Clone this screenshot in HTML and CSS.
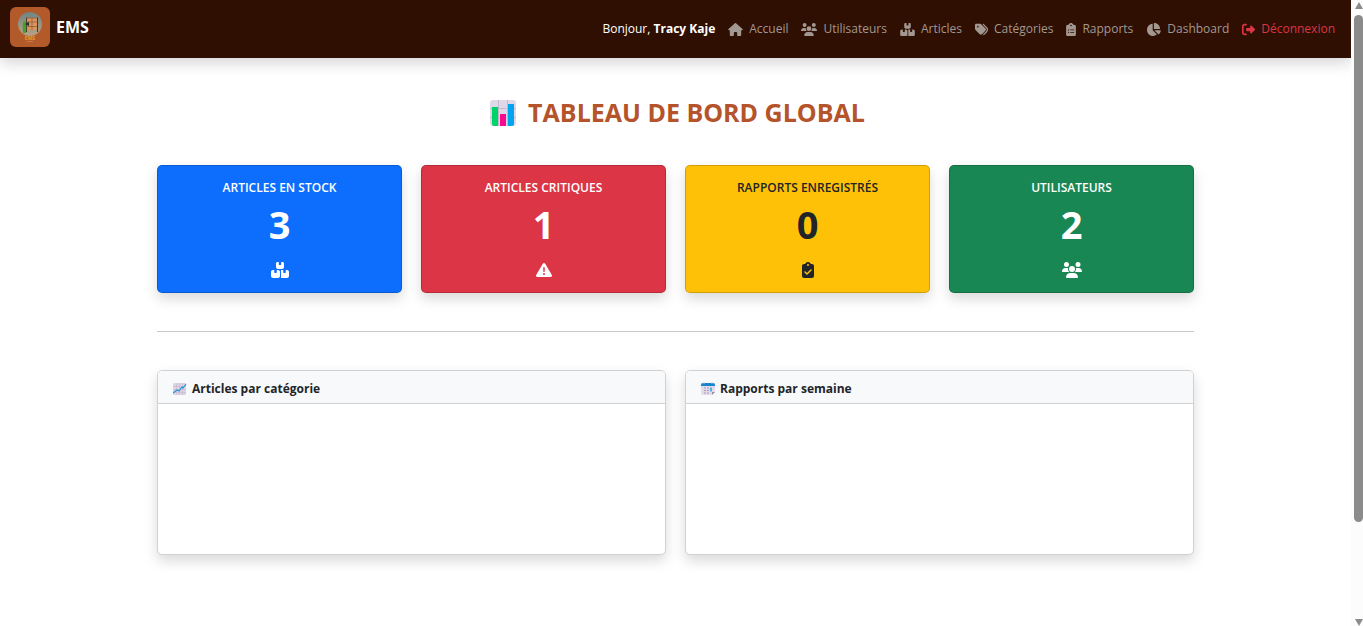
FILE: index.html
```html
<!DOCTYPE html>
<html lang="fr">
<head>
<meta charset="utf-8">
<title>EMS - Tableau de bord</title>
<link rel="stylesheet" href="styles.css">
</head>
<body>
<svg class="defs" aria-hidden="true">
  <symbol id="house" viewBox="0 0 576 512"><path d="M575.8 255.5c0 18-15 32.1-32 32.1h-32l.7 160.2c0 2.7-.2 5.4-.5 8.1V472c0 22.1-17.9 40-40 40H456c-1.100 0-2.200 0-3.300-.1c-1.400 .1-2.800 .1-4.200 .1H416 392c-22.100 0-40-17.900-40-40V448 384c0-17.700-14.300-32-32-32H256c-17.700 0-32 14.300-32 32v64 24c0 22.100-17.900 40-40 40H160 128.100c-1.500 0-3-.1-4.500-.2c-1.200 .1-2.400 .2-3.600 .2H104c-22.100 0-40-17.900-40-40V360c0-.9 0-1.900 .1-2.800V287.600H32c-18 0-32-14-32-32.100c0-9 3-17 10-24L266.400 8c7-7 15-8 22-8s15 2 21 7L564.800 231.500c8 7 12 15 11 24z"/></symbol>
  <symbol id="users" viewBox="0 0 640 512"><path d="M144 0a80 80 0 1 1 0 160A80 80 0 1 1 144 0zM512 0a80 80 0 1 1 0 160A80 80 0 1 1 512 0zM0 298.7C0 239.8 47.8 192 106.7 192h42.7c15.9 0 31 3.5 44.6 9.7c-1.3 7.2-1.9 14.7-1.9 22.3c0 38.2 16.8 72.5 43.3 96H21.3C9.6 320 0 310.4 0 298.7zM405.3 320h-.7c26.6-23.5 43.3-57.8 43.3-96c0-7.6-.7-15-1.9-22.3c13.6-6.3 28.7-9.7 44.6-9.7h42.7C592.2 192 640 239.8 640 298.7c0 11.8-9.6 21.3-21.3 21.3H405.3zM224 224a96 96 0 1 1 192 0 96 96 0 1 1 -192 0zM128 485.3C128 411.7 187.7 352 261.3 352H378.7C452.3 352 512 411.7 512 485.3c0 14.7-11.9 26.7-26.7 26.7H154.7c-14.7 0-26.7-11.9-26.7-26.7z"/></symbol>
  <symbol id="boxes" viewBox="0 0 576 512"><path d="M248 0H208c-26.5 0-48 21.5-48 48V160c0 35.3 28.7 64 64 64H352c35.3 0 64-28.7 64-64V48c0-26.5-21.5-48-48-48H328V80c0 8.8-7.2 16-16 16H264c-8.8 0-16-7.2-16-16V0zM64 256c-35.3 0-64 28.7-64 64V448c0 35.3 28.7 64 64 64H224c35.3 0 64-28.7 64-64V320c0-35.3-28.7-64-64-64H184v80c0 8.8-7.2 16-16 16H120c-8.8 0-16-7.2-16-16V256H64zM352 512H512c35.3 0 64-28.7 64-64V320c0-35.3-28.7-64-64-64H472v80c0 8.8-7.2 16-16 16H408c-8.8 0-16-7.2-16-16V256H352c-15 0-28.8 5.1-39.7 13.8c4.9 10.4 7.7 22 7.7 34.2V464c0 12.2-2.8 23.8-7.7 34.2C323.2 506.9 337 512 352 512z"/></symbol>
  <symbol id="tags" viewBox="0 0 512 512"><path d="M345 39.1L472.8 168.4c52.4 53 52.4 138.2 0 191.2L360.8 472.9c-9.3 9.4-24.5 9.5-33.9 .2s-9.5-24.5-.2-33.9L438.6 325.9c33.9-34.3 33.9-89.4 0-123.7L310.9 72.9c-9.3-9.4-9.2-24.6 .2-33.9s24.6-9.2 33.9 .2zM0 229.5V80C0 53.5 21.5 32 48 32H197.5c17 0 33.3 6.7 45.3 18.7l168 168c25 25 25 65.5 0 90.5L277.3 442.7c-25 25-65.5 25-90.5 0l-168-168C6.7 262.7 0 246.5 0 229.5zM144 144a32 32 0 1 0 -64 0 32 32 0 1 0 64 0z"/></symbol>
  <symbol id="clip-list" viewBox="0 0 384 512"><path d="M192 0c-41.8 0-77.4 26.7-90.5 64H64C28.7 64 0 92.7 0 128V448c0 35.3 28.7 64 64 64H320c35.3 0 64-28.7 64-64V128c0-35.3-28.7-64-64-64H282.5C269.4 26.7 233.8 0 192 0zm0 64a32 32 0 1 1 0 64 32 32 0 1 1 0-64zM72 272a24 24 0 1 1 48 0 24 24 0 1 1 -48 0zm104-16H304c8.8 0 16 7.2 16 16s-7.2 16-16 16H176c-8.8 0-16-7.2-16-16s7.2-16 16-16zM72 368a24 24 0 1 1 48 0 24 24 0 1 1 -48 0zm88 0c0-8.8 7.2-16 16-16H304c8.8 0 16 7.2 16 16s-7.2 16-16 16H176c-8.8 0-16-7.2-16-16z" fill-rule="evenodd"/></symbol>
  <symbol id="clip-check" viewBox="0 0 384 512"><path d="M192 0c-41.8 0-77.4 26.7-90.5 64H64C28.7 64 0 92.7 0 128V448c0 35.3 28.7 64 64 64H320c35.3 0 64-28.7 64-64V128c0-35.3-28.7-64-64-64H282.5C269.4 26.7 233.8 0 192 0zm0 64a32 32 0 1 1 0 64 32 32 0 1 1 0-64zM305 273L177 401c-9.4 9.4-24.6 9.4-33.9 0L79 337c-9.4-9.4-9.4-24.6 0-33.9s24.6-9.4 33.9 0l47 47L271 239c9.4-9.4 24.6-9.4 33.9 0s9.4 24.6 0 33.9z" fill-rule="evenodd"/></symbol>
  <symbol id="pie" viewBox="0 0 576 512"><path d="M304 240V16.6c0-9 7-16.6 16-16.6C443.7 0 544 100.3 544 224c0 9-7.600 16-16.600 16H304zM32 272C32 150.700 122.100 50.300 239 34.300c9.200-1.300 17 6.100 17 15.400V288L412.500 444.500c6.700 6.700 6.200 17.700-1.500 23.100C371.800 495.600 323.800 512 272 512C139.500 512 32 404.600 32 272zm526.400 16c9.300 0 16.600 7.800 15.400 17c-7.700 55.900-34.600 105.600-73.900 142.300c-6 5.600-15.400 5.200-21.200-.7L320 288H558.400z"/></symbol>
  <symbol id="logout" viewBox="0 0 512 512"><path d="M377.9 105.9L500.7 228.7c7.2 7.2 11.3 17.1 11.3 27.3s-4.1 20.1-11.3 27.3L377.9 406.1c-6.4 6.4-15 9.9-24 9.9c-18.7 0-33.9-15.2-33.9-33.9l0-62.1-128 0c-17.7 0-32-14.3-32-32l0-64c0-17.7 14.3-32 32-32l128 0 0-62.1c0-18.7 15.2-33.9 33.9-33.9c9 0 17.6 3.6 24 9.9zM160 96L96 96c-17.7 0-32 14.3-32 32l0 256c0 17.7 14.3 32 32 32l64 0c17.7 0 32 14.3 32 32s-14.3 32-32 32l-64 0c-53 0-96-43-96-96L0 128C0 75 43 32 96 32l64 0c17.7 0 32 14.3 32 32s-14.3 32-32 32z"/></symbol>
  <symbol id="warning" viewBox="0 0 512 512"><path d="M256 32c14.2 0 27.3 7.5 34.5 19.8l216 368c7.3 12.4 7.3 27.7 .2 40.1S486.3 480 472 480H40c-14.3 0-27.6-7.7-34.7-20.1s-7-27.8 .2-40.1l216-368C228.7 39.5 241.8 32 256 32zm0 128c-13.3 0-24 10.7-24 24V296c0 13.3 10.7 24 24 24s24-10.7 24-24V184c0-13.3-10.7-24-24-24zm32 224a32 32 0 1 0 -64 0 32 32 0 1 0 64 0z" fill-rule="evenodd"/></symbol>
</svg>

<header class="navbar">
  <a class="brand" href="#">
    <svg class="logo" viewBox="0 0 40 40" aria-hidden="true">
      <defs><linearGradient id="disc" x1="0" y1="0" x2="0" y2="1"><stop offset="0" stop-color="#6f8583"/><stop offset="1" stop-color="#b9a184"/></linearGradient></defs>
      <rect width="40" height="40" rx="6" fill="#b35a2a"/>
      <circle cx="20" cy="17" r="12" fill="url(#disc)"/>
      <path d="M17 11h10v12H17z" fill="#d9935c"/>
      <path d="M16.500 25V10.500M27.500 10.500V25" stroke="#4d3528" fill="none"/>
      <path d="M22 11v12M17 15h10M17 19.500h10M17 11h10" stroke="#8a5634" stroke-width=".7" fill="none"/>
      <path d="M14 14c-2 3-1 8-1 12h3c0-4 1-8-1-12z" fill="#45a02c"/>
      <path d="M15 17l4-2v4z" fill="#252b36"/>
      <text class="logo-text" x="20" y="33" text-anchor="middle">EMS</text>
      <path d="M17 34.500h6" stroke="#c99568" stroke-width=".6"/>
    </svg>
    <span>EMS</span>
  </a>
  <nav class="links">
    <span class="hello">Bonjour, <strong>Tracy Kaje</strong></span>
    <a href="#"><svg class="icon w15"><use href="#house"/></svg>Accueil</a>
    <a href="#"><svg class="icon w16"><use href="#users"/></svg>Utilisateurs</a>
    <a href="#"><svg class="icon w15"><use href="#boxes"/></svg>Articles</a>
    <a href="#"><svg class="icon w13"><use href="#tags"/></svg>Catégories</a>
    <a href="#"><svg class="icon w10"><use href="#clip-list"/></svg>Rapports</a>
    <a href="#"><svg class="icon w15"><use href="#pie"/></svg>Dashboard</a>
    <a class="logout" href="#"><svg class="icon w13"><use href="#logout"/></svg>Déconnexion</a>
  </nav>
</header>

<main class="container">
  <h1 class="title">
    <svg class="title-icon" viewBox="0 0 26 26" aria-hidden="true">
      <rect width="26" height="26" rx="3" fill="#e0d8e8"/>
      <path d="M8.500 0v26M17.500 0v26M0 8.500h26M0 17.500h26" stroke="#c3b9cf"/>
      <path d="M2 7h6v19H4a2 2 0 0 1-2-2z" fill="#00d26a"/>
      <path d="M10 14h6v12h-6z" fill="#f70a8d"/>
      <path d="M18 4h6v20a2 2 0 0 1-2 2h-4z" fill="#00a6ed"/>
    </svg>
    TABLEAU DE BORD GLOBAL
  </h1>

  <section class="stats">
    <article class="stat blue"><h2>ARTICLES EN STOCK</h2><p>3</p><svg><use href="#boxes"/></svg></article>
    <article class="stat red"><h2>ARTICLES CRITIQUES</h2><p>1</p><svg><use href="#warning"/></svg></article>
    <article class="stat yellow"><h2>RAPPORTS ENREGISTRÉS</h2><p>0</p><svg><use href="#clip-check"/></svg></article>
    <article class="stat green"><h2>UTILISATEURS</h2><p>2</p><svg><use href="#users"/></svg></article>
  </section>

  <hr class="rule">

  <section class="charts">
    <article class="panel">
      <h2>
        <svg class="panel-icon" viewBox="0 0 14 14" aria-hidden="true"><rect y="1" width="13" height="12" rx="1" fill="#ddd3e2"/><path d="M3.500 1v12M6.500 1v12M9.500 1v12M0 4.500h13M0 7.500h13M0 10.500h13" stroke="#c4b8d0" stroke-width=".6"/><path d="M0 11l4-3 2 1 3-4 1 1 3-4" fill="none" stroke="#2596dd" stroke-width="1.200"/></svg>
        Articles par catégorie
      </h2>
      <div class="chart"></div>
    </article>
    <article class="panel">
      <h2>
        <svg class="panel-icon" viewBox="0 0 14 14" aria-hidden="true"><path d="M0 4h14v6l-3 3H2a2 2 0 0 1-2-2z" fill="#e3dbe9"/><path d="M14 10l-3 3v-3z" fill="#998ba6"/><path d="M0 4V3a2 2 0 0 1 2-2h10a2 2 0 0 1 2 2v1z" fill="#1683cb"/><path d="M3 0v2M11 0v2" stroke="#b9cbdc"/><path d="M3 6h2M6 6h2M3 8.500h2M6 8.500h2M3 11h2M6 11h2" stroke="#a99db6"/><path d="M10 5.500v4" stroke="#27a4e8" stroke-width="1.500"/></svg>
        Rapports par semaine
      </h2>
      <div class="chart"></div>
    </article>
  </section>
</main>

<div class="scrollbar" aria-hidden="true">
  <span class="arrow up"></span>
  <span class="thumb"></span>
  <span class="track"></span>
  <span class="arrow down"></span>
</div>
</body>
</html>
```

FILE: styles.css
```css
* { box-sizing: border-box; }

body {
  margin: 0;
  padding-right: 12px;
  background: #fff;
  color: #212529;
  font: 12px/20px "Open Sans", "Noto Sans", sans-serif;
}

h1, h2, p { margin: 0; }
svg { fill: currentColor; }
.defs { display: none; }

.navbar {
  display: flex;
  align-items: center;
  justify-content: space-between;
  height: 58px;
  padding: 0 16px 4px 10px;
  background: #2e0f02;
  box-shadow: 0 6px 13px rgba(0, 0, 0, .15);
}

.brand {
  display: flex;
  align-items: center;
  gap: 6px;
  color: #fff;
  font-size: 16px;
  font-weight: 700;
  text-decoration: none;
}

.logo { width: 40px; height: 40px; }
.logo-text { fill: #e2a02c; font-size: 5px; font-weight: 700; }

.links { display: flex; align-items: center; gap: 13px; padding-top: 4px; white-space: nowrap; }
.links a {
  display: flex;
  align-items: center;
  gap: 6px;
  color: #a39791;
  text-decoration: none;
}
.links .logout { color: #dc3545; }
.hello { color: #fff; }

.icon { height: 13px; }
.w10 { width: 10px; }
.w13 { width: 13px; }
.w15 { width: 15px; }
.w16 { width: 16px; }

.container { width: calc(100% - 32px); max-width: 1037px; margin: 0 auto; padding: 38px 0 72px; }

.title {
  display: flex;
  align-items: center;
  justify-content: center;
  gap: 12px;
  margin-bottom: 36px;
  padding-left: 4px;
  color: #b5532a;
  font-size: 25px;
  line-height: 33px;
  font-weight: 700;
}
.title-icon { width: 26px; height: 26px; }

.stats { display: grid; grid-template-columns: repeat(4, 1fr); gap: 19px; }
.stat {
  display: flex;
  flex-direction: column;
  align-items: center;
  padding: 13px;
  border: 1px solid rgba(0, 0, 0, .176);
  border-radius: 5px;
  color: #fff;
  box-shadow: 0 6px 13px rgba(0, 0, 0, .15);
}
.stat h2 { font-size: 12px; line-height: 18px; font-weight: 600; }
.stat p { margin: 4px 0 8px; font-size: 38px; line-height: 46px; font-weight: 700; }
.stat svg { width: 20px; height: 16px; margin: 7px 0 1px; }
.blue { background: #0d6efd; }
.red { background: #dc3545; }
.yellow { background: #ffc107; color: #212529; }
.green { background: #198754; }

.rule { margin: 38px 0; border: 0; border-top: 1px solid #c8c9ca; }

.charts { display: grid; grid-template-columns: 1fr 1fr; gap: 19px; }
.panel {
  border: 1px solid #d0d1d2;
  border-radius: 5px;
  background: #fff;
  box-shadow: 0 6px 13px rgba(0, 0, 0, .15);
}
.panel h2 {
  display: flex;
  align-items: center;
  gap: 5px;
  padding: 8px 15px 4px;
  border-bottom: 1px solid #d0d1d2;
  border-radius: 4px 4px 0 0;
  background: #f8f9fa;
  font-size: 12px;
  line-height: 20px;
  font-weight: 700;
}
.panel-icon { width: 14px; height: 14px; }
.chart { height: 150px; }

.scrollbar {
  position: fixed;
  inset: 0 0 0 auto;
  display: flex;
  flex-direction: column;
  align-items: center;
  width: 12px;
  padding: 2px 0 0 3px;
  background: #fcfcfc;
}
.arrow { border: 4px solid transparent; }
.up { border-top: 0; border-bottom: 7px solid #8b8b8b; margin-bottom: 6px; }
.down { border-bottom: 0; border-top: 7px solid #8b8b8b; }
.thumb { flex: 507; width: 9px; border-radius: 5px; background: #8b8b8b; }
.track { flex: 97; }
```
